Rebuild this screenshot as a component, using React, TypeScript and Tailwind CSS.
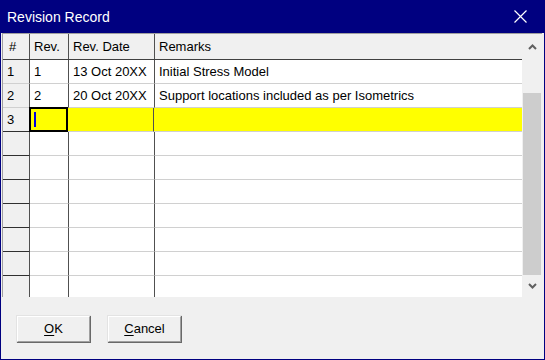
import React from "react";

const font = { fontFamily: '"Liberation Sans", Arial, sans-serif' };

type Row = { n?: string; rev?: string; date?: string; remarks?: string; sel?: boolean };

const rows: Row[] = [
  { n: "1", rev: "1", date: "13 Oct 20XX", remarks: "Initial Stress Model" },
  { n: "2", rev: "2", date: "20 Oct 20XX", remarks: "Support locations included as per Isometrics" },
  { n: "3", sel: true },
  {}, {}, {}, {}, {}, {}, {},
];

function Chevron({ up }: { up?: boolean }) {
  return (
    <svg width="9" height="6" viewBox="0 0 9 6">
      <path
        d={up ? "M1 5 L4.5 1.5 L8 5" : "M1 1 L4.5 4.5 L8 1"}
        fill="none"
        stroke="#606060"
        strokeWidth="2"
      />
    </svg>
  );
}

export default function App() {
  return (
    <div className="w-[545px] h-[360px] bg-[#000080] flex flex-col" style={font}>
      <div className="h-[33px] flex items-center justify-between pl-[7px] pr-[18px] shrink-0">
        <span className="text-white text-[14px] leading-none">Revision Record</span>
        <svg width="13" height="13" viewBox="0 0 13 13">
          <path d="M0.5 0.5 L12.5 12.5 M12.5 0.5 L0.5 12.5" stroke="#ffffff" strokeWidth="1.2" />
        </svg>
      </div>
      <div className="flex-1 mx-[1px] mb-[1px] bg-[#f0f0f0] flex flex-col">
        <div className="h-[264px] ml-[1px] mr-[2px] border-t border-l border-[#a0a0a0] flex shrink-0 bg-white">
          <div className="flex-1 overflow-hidden text-[13px] text-black">
            <div className="flex h-[26px] bg-[#f0f0f0] border-b border-[#404040]">
              <div className="w-[27px] border-r border-[#505050] pl-[6px] flex items-center">#</div>
              <div className="w-[39px] border-r border-[#505050] pl-[4px] flex items-center">Rev.</div>
              <div className="w-[86px] border-r border-[#505050] pl-[4px] flex items-center">Rev. Date</div>
              <div className="flex-1 pl-[4px] flex items-center">Remarks</div>
            </div>
            {rows.map((r, i) => (
              <div key={i} className={`flex h-[24px] ${r.sel ? "bg-[#ffff00]" : "bg-white"}`}>
                <div
                  className={`w-[27px] border-r border-[#505050] bg-[#f0f0f0] pl-[4px] flex items-center border-b ${
                    r.n && !r.sel ? "border-b-[#d0d0d0]" : "border-b-[#303030]"
                  }`}
                >
                  {r.n}
                </div>
                {r.sel ? (
                  <div className="w-[39px] border-2 border-black -ml-[1px] -mt-[1px] h-[25px] pl-[3px] flex items-center">
                    <div className="w-[2px] h-[15px] bg-[#0000e0]" />
                  </div>
                ) : (
                  <div className="w-[39px] border-r border-b border-r-[#505050] border-b-[#d0d0d0] pl-[4px] flex items-center">
                    {r.rev}
                  </div>
                )}
                <div className="w-[86px] border-r border-b border-r-[#505050] border-b-[#d0d0d0] pl-[4px] flex items-center whitespace-nowrap overflow-hidden">
                  {r.date}
                </div>
                <div className="flex-1 border-b border-[#d0d0d0] pl-[4px] flex items-center whitespace-nowrap">
                  {r.remarks}
                </div>
              </div>
            ))}
          </div>
          <div className="w-[20px] bg-[#f0f0f0] flex flex-col items-stretch">
            <div className="h-[26px] flex items-center justify-center">
              <Chevron up />
            </div>
            <div className="h-[33px]" />
            <div className="h-[182px] bg-[#cdcdcd] mx-[1px]" />
            <div className="flex-1 flex items-center justify-center">
              <Chevron />
            </div>
          </div>
        </div>
        <div className="flex gap-[16px] pl-[15px] pt-[18px]">
          {["OK", "Cancel"].map((t) => (
            <div
              key={t}
              className="w-[75px] h-[28px] bg-[#e3e3e3] p-[1px] pr-0 pb-0 flex"
            >
              <div className="flex-1 flex border-r border-b border-[#696969]">
                <div className="flex-1 bg-[#f0f0f0] border-t border-l border-white border-r border-b border-r-[#a0a0a0] border-b-[#a0a0a0] flex items-center justify-center text-[13px] text-black">
                  <span>
                    <span className="underline underline-offset-2">{t[0]}</span>
                    {t.slice(1)}
                  </span>
                </div>
              </div>
            </div>
          ))}
        </div>
      </div>
    </div>
  );
}
